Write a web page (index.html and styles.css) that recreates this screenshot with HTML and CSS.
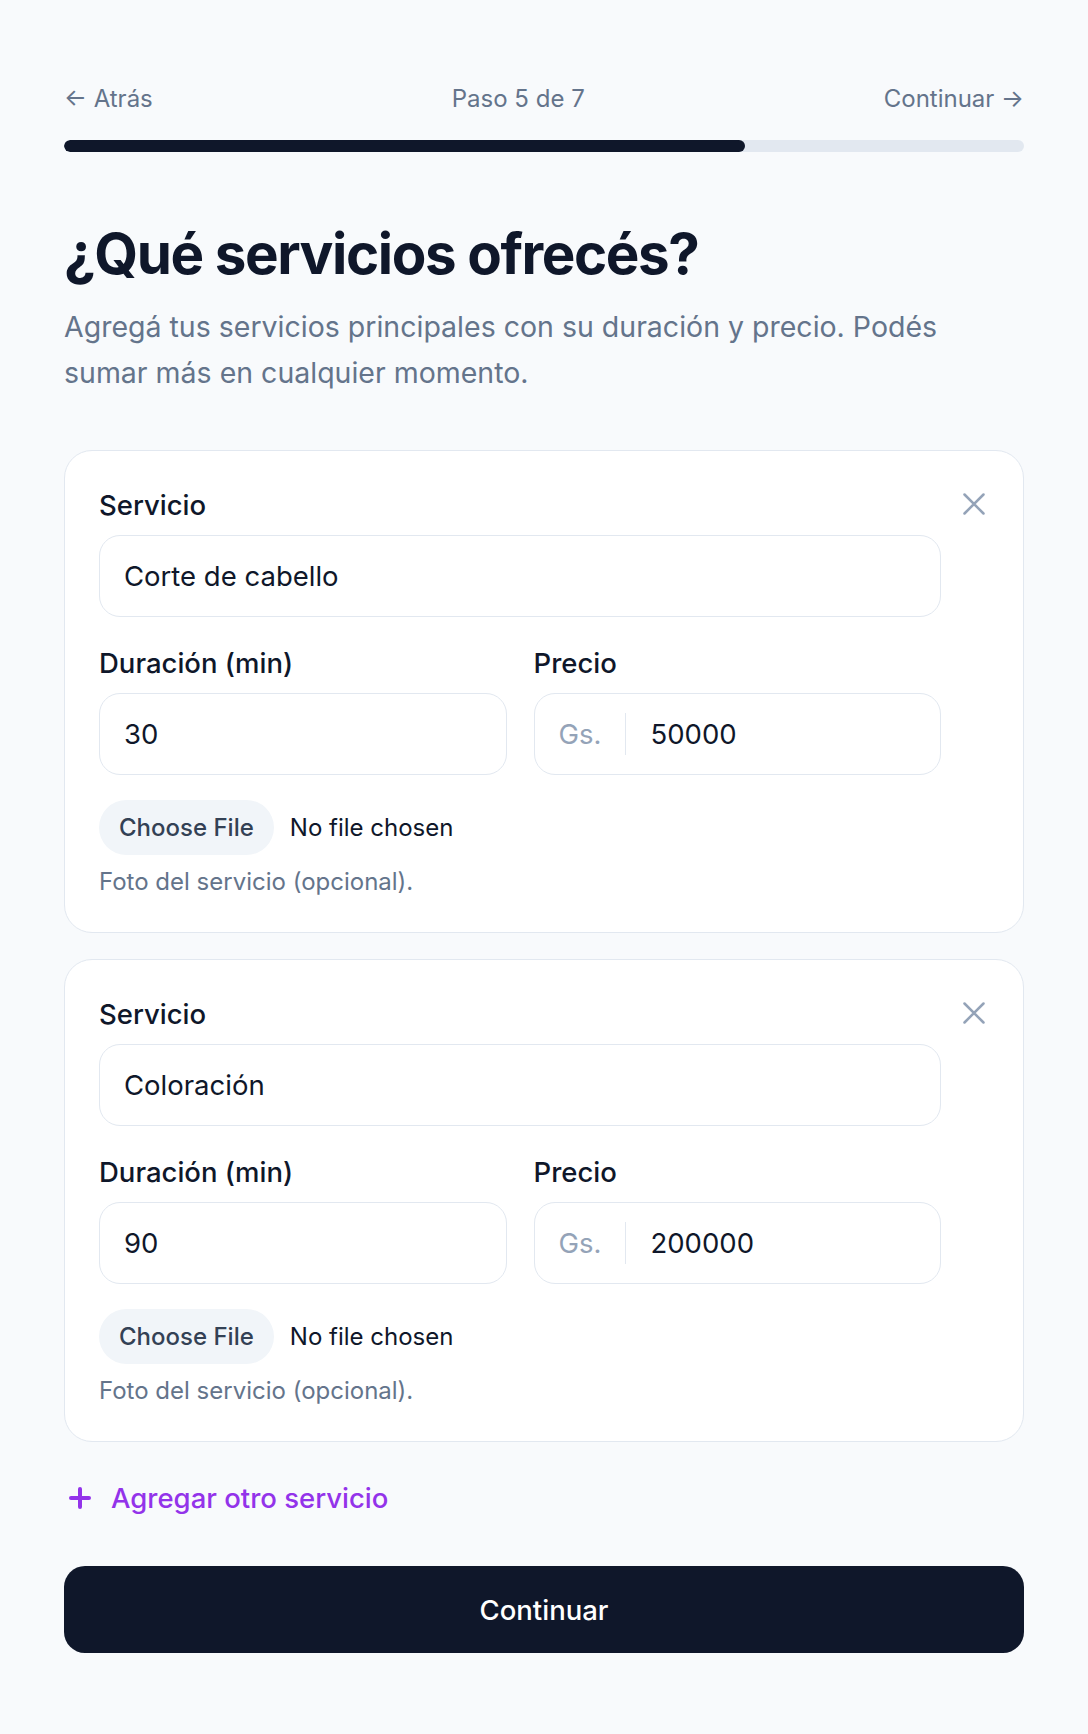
FILE: index.html
```html
<!DOCTYPE html>
<html lang="es">
<head>
    <meta charset="UTF-8">
    <meta name="viewport" content="width=device-width, initial-scale=1.0">
    <title>Servicios - Paso 5 de 7</title>
    <link rel="stylesheet" href="styles.css">
</head>

<body>
    <main class="page">
        <nav class="steps">
            <a href="#" class="step-link">← Atrás</a>
            <span class="step-count">Paso 5 de 7</span>
            <a href="#" class="step-link">Continuar →</a>
        </nav>

        <div class="progress">
            <div class="progress-fill" style="width: 70.9%"></div>
        </div>

        <h1 class="title">¿Qué servicios ofrecés?</h1>
        <p class="subtitle">Agregá tus servicios principales con su duración y precio. Podés sumar más en cualquier momento.</p>

        <form class="services" id="servicesForm">
            <div class="service-card">
                <div class="service-fields">
                    <label class="field-label">Servicio</label>
                    <input type="text" class="field-input" value="Corte de cabello">
                    <div class="field-row">
                        <div class="field">
                            <label class="field-label">Duración (min)</label>
                            <input type="number" class="field-input" value="30">
                        </div>
                        <div class="field">
                            <label class="field-label">Precio</label>
                            <div class="price-input">
                                <span class="currency">Gs.</span>
                                <input type="number" value="50000">
                            </div>
                        </div>
                    </div>
                    <input type="file" class="file-input" accept="image/*">
                    <p class="hint">Foto del servicio (opcional).</p>
                </div>
                <button type="button" class="remove-btn" aria-label="Quitar servicio">
                    <svg width="30" height="30" viewBox="0 0 30 30" fill="none" stroke="currentColor" stroke-width="2.5" stroke-linecap="round"><path d="M5.5 5.5l19 19M24.5 5.5l-19 19"/></svg>
                </button>
            </div>

            <div class="service-card">
                <div class="service-fields">
                    <label class="field-label">Servicio</label>
                    <input type="text" class="field-input" value="Coloración">
                    <div class="field-row">
                        <div class="field">
                            <label class="field-label">Duración (min)</label>
                            <input type="number" class="field-input" value="90">
                        </div>
                        <div class="field">
                            <label class="field-label">Precio</label>
                            <div class="price-input">
                                <span class="currency">Gs.</span>
                                <input type="number" value="200000">
                            </div>
                        </div>
                    </div>
                    <input type="file" class="file-input" accept="image/*">
                    <p class="hint">Foto del servicio (opcional).</p>
                </div>
                <button type="button" class="remove-btn" aria-label="Quitar servicio">
                    <svg width="30" height="30" viewBox="0 0 30 30" fill="none" stroke="currentColor" stroke-width="2.5" stroke-linecap="round"><path d="M5.5 5.5l19 19M24.5 5.5l-19 19"/></svg>
                </button>
            </div>
        </form>

        <button type="button" class="add-btn">
            <svg width="22" height="22" viewBox="0 0 22 22" fill="none" stroke="currentColor" stroke-width="4" stroke-linecap="round"><path d="M11 2v18M2 11h18"/></svg>
            Agregar otro servicio
        </button>

        <button type="submit" form="servicesForm" class="submit-btn">Continuar</button>
    </main>
</body>
</html>
```

FILE: styles.css
```css
body {
    background-color: #f8fafc;
    color: #0f172a;
    font-family: 'Inter', 'Noto Sans', sans-serif;
    margin: 0;
    padding: 0;
}

.page {
    max-width: 960px;
    margin: 0 auto;
    padding: 80px 0 82px;
}

/* Шапка с шагами */
.steps {
    display: flex;
    justify-content: space-between;
    align-items: center;
    height: 36px;
    font-size: 24px;
    color: #64748b;
}

.step-link {
    color: #64748b;
    text-decoration: none;
}

.progress {
    margin-top: 24px;
    height: 12px;
    border-radius: 999px;
    background-color: #e2e8f0;
    overflow: hidden;
}

.progress-fill {
    height: 100%;
    border-radius: 999px;
    background-color: #0f172a;
}

.title {
    margin: 72px 0 0;
    font-size: 56.5px;
    line-height: 60px;
    font-weight: 700;
    letter-spacing: -0.025em;
    color: #0f172a;
}

.subtitle {
    margin: 20px 0 0;
    font-size: 28.5px;
    line-height: 46px;
    color: #64748b;
}

/* Карточки услуг */
.services {
    margin-top: 54px;
    display: flex;
    flex-direction: column;
    gap: 26px;
}

.service-card {
    display: flex;
    align-items: flex-start;
    gap: 18px;
    background-color: #fff;
    border: 1px solid #e2e8f0;
    border-radius: 28px;
    padding: 34px 34px 33px;
}

.service-fields {
    flex: 1;
    min-width: 0;
    display: flex;
    flex-direction: column;
}

.field-label {
    display: block;
    font-size: 27.5px;
    line-height: 40px;
    font-weight: 500;
    margin-bottom: 10px;
}

.field-input {
    box-sizing: border-box;
    width: 100%;
    height: 82px;
    padding: 0 24px;
    border: 1px solid #e2e8f0;
    border-radius: 21px;
    background-color: #fff;
    font-family: inherit;
    font-size: 27.5px;
    color: #0f172a;
}

.field-input:focus,
.price-input input:focus {
    outline: none;
}

.field-row {
    display: grid;
    grid-template-columns: repeat(2, minmax(0, 1fr));
    gap: 27px;
    margin-top: 26px;
}

.field {
    min-width: 0;
}

.price-input {
    box-sizing: border-box;
    display: flex;
    align-items: center;
    height: 82px;
    padding: 0 24px;
    border: 1px solid #e2e8f0;
    border-radius: 21px;
    background-color: #fff;
}

.currency {
    font-size: 27.5px;
    color: #94a3b8;
    padding-right: 24px;
    border-right: 1px solid #e2e8f0;
    line-height: 42px;
}

.price-input input {
    flex: 1;
    width: 100%;
    min-width: 0;
    border: none;
    padding: 0 0 0 24px;
    font-family: inherit;
    font-size: 27.5px;
    color: #0f172a;
    background: transparent;
}

input[type=number] {
    -moz-appearance: textfield;
}

input[type=number]::-webkit-inner-spin-button,
input[type=number]::-webkit-outer-spin-button {
    -webkit-appearance: none;
    margin: 0;
}

.file-input {
    margin-top: 25px;
    height: 55px;
    width: 100%;
    font-family: inherit;
    font-size: 24px;
    color: #0f172a;
}

.file-input::file-selector-button {
    height: 55px;
    padding: 0 20px;
    margin-right: 16px;
    border: none;
    border-radius: 999px;
    background-color: #f1f5f9;
    color: #334155;
    font-family: inherit;
    font-size: 24px;
    font-weight: 500;
}

.hint {
    margin: 9px 0 0;
    font-size: 24px;
    line-height: 35px;
    color: #64748b;
}

.remove-btn {
    flex: none;
    width: 30px;
    height: 30px;
    margin-top: 4px;
    padding: 0;
    border: none;
    background: none;
    color: #94a3b8;
    cursor: pointer;
}

.remove-btn svg {
    display: block;
}

/* Кнопки внизу */
.add-btn {
    display: flex;
    align-items: center;
    gap: 20px;
    margin-top: 36px;
    padding: 0 0 0 5px;
    height: 40px;
    border: none;
    background: none;
    font-family: inherit;
    font-size: 27.5px;
    font-weight: 500;
    color: #9333ea;
    cursor: pointer;
}

.submit-btn {
    display: block;
    width: 100%;
    height: 87px;
    margin-top: 48px;
    border: none;
    border-radius: 21px;
    background-color: #0f172a;
    color: #fff;
    font-family: inherit;
    font-size: 27.5px;
    font-weight: 500;
    cursor: pointer;
}
```
